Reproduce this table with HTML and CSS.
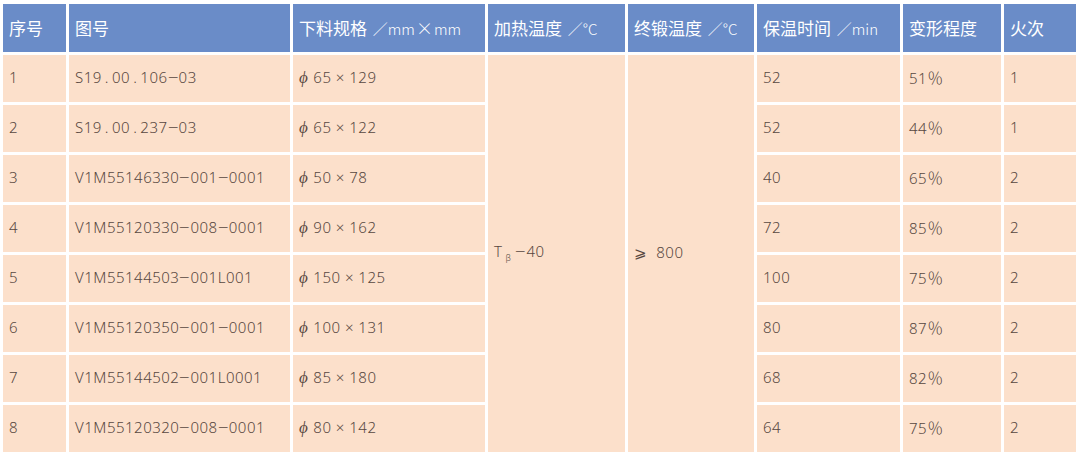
FILE: index.html
```html
<!DOCTYPE html>
<html lang="zh">
<head>
<meta charset="utf-8">
<link rel="stylesheet" href="styles.css">
</head>
<body>
<table class="spec">
  <colgroup>
    <col class="c1"><col class="c2"><col class="c3"><col class="c4"><col class="c5"><col class="c6"><col class="c7"><col class="c8">
  </colgroup>
  <thead>
    <tr>
      <th>序号</th><th>图号</th><th>下料规格 <span class="unit">／mm<span class="times">×</span>mm</span></th><th>加热温度 <span class="unit">／°C</span></th><th>终锻温度 <span class="unit">／°C</span></th><th>保温时间 <span class="unit">／min</span></th><th>变形程度</th><th>火次</th>
    </tr>
  </thead>
  <tbody>
    <tr><td>1</td><td>S19<span class="dot">.</span>00<span class="dot">.</span>106<span class="dash">−</span>03</td><td><i class="phi">ϕ</i>65 × 129</td><td rowspan="8" class="merged">T<sub>β</sub><span class="dash">−</span>40</td><td rowspan="8" class="merged"><span class="ge">⩾</span>&nbsp; 800</td><td>52</td><td>51<span class="pct">％</span></td><td>1</td></tr>
    <tr><td>2</td><td>S19<span class="dot">.</span>00<span class="dot">.</span>237<span class="dash">−</span>03</td><td><i class="phi">ϕ</i>65 × 122</td><td>52</td><td>44<span class="pct">％</span></td><td>1</td></tr>
    <tr><td>3</td><td>V1M55146330<span class="dash">−</span>001<span class="dash">−</span>0001</td><td><i class="phi">ϕ</i>50 × 78</td><td>40</td><td>65<span class="pct">％</span></td><td>2</td></tr>
    <tr><td>4</td><td>V1M55120330<span class="dash">−</span>008<span class="dash">−</span>0001</td><td><i class="phi">ϕ</i>90 × 162</td><td>72</td><td>85<span class="pct">％</span></td><td>2</td></tr>
    <tr><td>5</td><td>V1M55144503<span class="dash">−</span>001L001</td><td><i class="phi">ϕ</i>150 × 125</td><td>100</td><td>75<span class="pct">％</span></td><td>2</td></tr>
    <tr><td>6</td><td>V1M55120350<span class="dash">−</span>001<span class="dash">−</span>0001</td><td><i class="phi">ϕ</i>100 × 131</td><td>80</td><td>87<span class="pct">％</span></td><td>2</td></tr>
    <tr><td>7</td><td>V1M55144502<span class="dash">−</span>001L0001</td><td><i class="phi">ϕ</i>85 × 180</td><td>68</td><td>82<span class="pct">％</span></td><td>2</td></tr>
    <tr><td>8</td><td>V1M55120320<span class="dash">−</span>008<span class="dash">−</span>0001</td><td><i class="phi">ϕ</i>80 × 142</td><td>64</td><td>75<span class="pct">％</span></td><td>2</td></tr>
  </tbody>
</table>
</body>
</html>
```
FILE: styles.css
```css
html, body {
  margin: 0;
  padding: 0;
  background: #ffffff;
}
body {
  padding-top: 1px;
  font-family: "Noto Sans", "Noto Sans CJK SC", sans-serif;
}
.spec {
  border-collapse: separate;
  border-spacing: 3px;
  table-layout: fixed;
  width: 1079px;
}
.c1 { width: 63px; }
.c2 { width: 221px; }
.c3 { width: 192px; }
.c4 { width: 137px; }
.c5 { width: 126px; }
.c6 { width: 143px; }
.c7 { width: 98px; }
.c8 { width: 72px; }
.spec th {
  background: #6a8cc8;
  color: #ffffff;
  height: 46px;
  padding: 0 0 2px 6px;
  text-align: left;
  font-family: "Noto Sans CJK SC", sans-serif;
  font-weight: 400;
  font-size: 17px;
  white-space: nowrap;
}
.spec th .unit {
  font-family: "Noto Sans CJK SC", sans-serif;
  font-weight: 300;
  font-size: 15px;
  margin-left: 2px;
}
.times {
  font-size: 17px;
  margin: 0 1px;
}
.spec td {
  background: #fce0cb;
  color: #574740;
  height: 44px;
  padding: 0 0 3px 6px;
  font-family: "Noto Sans", "Noto Sans CJK SC", sans-serif;
  font-weight: 300;
  font-size: 15px;
  letter-spacing: 0.5px;
  white-space: nowrap;
}
.spec td.merged {
  vertical-align: middle;
}
.dot {
  margin: 0 3px;
}
.dash {
  display: inline-block;
  transform: scaleX(1.25);
  margin: 0 1px;
}
.phi {
  font-family: "Liberation Serif", serif;
  font-style: italic;
  font-size: 17px;
  margin-right: 5px;
}
.pct {
  font-family: "Noto Sans CJK SC", sans-serif;
  font-size: 16px;
  letter-spacing: 0;
}
.ge {
  font-family: "DejaVu Sans", sans-serif;
}
sub {
  font-size: 9px;
  margin: 0 4px 0 3px;
}
```
